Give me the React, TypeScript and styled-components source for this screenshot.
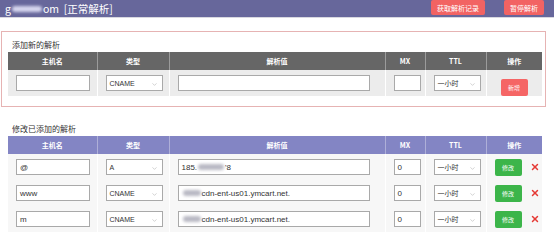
import styled, { createGlobalStyle } from "styled-components";
import { ChevronDown, X } from "lucide-react";

const GlobalStyle = createGlobalStyle`
  html, body {
    margin: 0;
    padding: 0;
    background: #fff;
  }
  body {
    font-family: "Noto Sans CJK SC", "Liberation Sans", sans-serif;
    color: #333;
  }
  * { box-sizing: border-box; }
`;

const Page = styled.div`
  width: 554px;
  height: 238px;
  overflow: hidden;
`;

const Header = styled.header`
  height: 18px;
  background: #67679b;
  border-bottom: 1px solid #d8d8e0;
  display: flex;
  align-items: flex-start;
  justify-content: space-between;
  padding: 0 10px 0 5px;
`;

const Domain = styled.div`
  color: #fff;
  font-size: 10.5px;
  line-height: 17px;
  display: flex;
  align-items: center;
  white-space: pre;
`;

const Blur = styled.span<{ $w: number; $dark?: boolean }>`
  display: inline-block;
  width: ${(p) => p.$w}px;
  height: 6px;
  border-radius: 3px;
  background: ${(p) => (p.$dark ? "#b9b9c4" : "#d6d6ee")};
  filter: blur(1.5px);
  margin: 0 1px;
`;

const HeaderButtons = styled.div`
  display: flex;
  gap: 19px;
`;

const HeadButton = styled.button<{ $w: number }>`
  width: ${(p) => p.$w}px;
  height: 15px;
  border: none;
  border-radius: 2px;
  background: #f26363;
  color: #fff;
  font-family: inherit;
  font-size: 7px;
  padding: 0;
`;

const Section = styled.section<{ $boxed?: boolean }>`
  margin: ${(p) => (p.$boxed ? "13px 8px 0 1px" : "8px 8px 0 1px")};
  border: 1px solid ${(p) => (p.$boxed ? "#e6b3b3" : "transparent")};
  padding: 4px 3px 10px 6px;
`;

const Title = styled.div`
  font-size: 8px;
  line-height: 12px;
  color: #333;
  padding-left: 4px;
  height: 16px;
  padding-top: 3px;
`;

const Table = styled.table`
  width: 534px;
  border-collapse: collapse;
  table-layout: fixed;
`;

const Th = styled.th<{ $tone: "gray" | "purple" }>`
  background: ${(p) => (p.$tone === "gray" ? "#666666" : "#8385c4")};
  color: #fff;
  font-size: 7px;
  font-weight: bold;
  height: 18px;
  padding: 0;
  border-left: 1px solid rgba(255, 255, 255, 0.35);
  &:first-child { border-left: none; }
`;

const Td = styled.td<{ $tone: "gray" | "light" }>`
  background: ${(p) => (p.$tone === "gray" ? "#ececec" : "#f7f7f7")};
  height: 26px;
  padding: 0 0 0 8px;
  border-left: 1px solid #fff;
  vertical-align: middle;
  &:first-child { border-left: none; }
`;

const Field = styled.div<{ $w: number }>`
  width: ${(p) => p.$w}px;
  height: 16px;
  border: 1px solid #a9a9a9;
  background: #fff;
  font-size: 8px;
  color: #333;
  padding-left: 3px;
  display: flex;
  align-items: center;
  position: relative;
  font-family: "Liberation Sans", "Noto Sans CJK SC", sans-serif;
`;

const SelectText = styled.span`
  font-size: 7px;
`;

const Chevron = styled(ChevronDown)`
  position: absolute;
  right: 4px;
  top: 5px;
  color: #999;
`;

const Btn = styled.button<{ $color: string }>`
  width: 27px;
  height: 17px;
  border: none;
  border-radius: 2px;
  background: ${(p) => p.$color};
  color: #fff;
  font-family: inherit;
  font-size: 6px;
  padding: 0;
`;

const ActionCell = styled.div`
  display: flex;
  align-items: center;
  gap: 8px;
`;

const Del = styled(X)`
  color: #e53935;
`;

const widths = [89, 72, 216, 40, 61, 56];
const heads = ["主机名", "类型", "解析值", "MX", "TTL", "操作"];

const Select = ({ value, w }: { value: string; w: number }) => (
  <Field $w={w}>
    <SelectText>{value}</SelectText>
    <Chevron size={7} strokeWidth={1.5} />
  </Field>
);

const HeadRow = ({ tone }: { tone: "gray" | "purple" }) => (
  <>
    <colgroup>
      {widths.map((w, i) => (
        <col key={i} style={{ width: w }} />
      ))}
    </colgroup>
    <thead>
      <tr>
        {heads.map((h) => (
          <Th key={h} $tone={tone}>
            {h}
          </Th>
        ))}
      </tr>
    </thead>
  </>
);

const records = [
  { host: "@", type: "A", value: "ip" },
  { host: "www", type: "CNAME", value: "cdn" },
  { host: "m", type: "CNAME", value: "cdn" },
];

export default function App() {
  return (
    <Page>
      <GlobalStyle />
      <Header>
        <Domain>
          g<Blur $w={30} />om  [正常解析]
        </Domain>
        <HeaderButtons>
          <HeadButton $w={54}>获取解析记录</HeadButton>
          <HeadButton $w={40}>暂停解析</HeadButton>
        </HeaderButtons>
      </Header>

      <Section $boxed>
        <Title>添加新的解析</Title>
        <Table>
          <HeadRow tone="gray" />
          <tbody>
            <tr>
              <Td $tone="gray">
                <Field $w={74} />
              </Td>
              <Td $tone="gray">
                <Select value="CNAME" w={57} />
              </Td>
              <Td $tone="gray">
                <Field $w={192} />
              </Td>
              <Td $tone="gray">
                <Field $w={27} />
              </Td>
              <Td $tone="gray">
                <Select value="一小时" w={47} />
              </Td>
              <Td $tone="gray" style={{ paddingLeft: 14 }}>
                <Btn $color="#f56565">新增</Btn>
              </Td>
            </tr>
          </tbody>
        </Table>
      </Section>

      <Section>
        <Title>修改已添加的解析</Title>
        <Table>
          <HeadRow tone="purple" />
          <tbody>
            {records.map((r) => (
              <tr key={r.host}>
                <Td $tone="light">
                  <Field $w={74}>{r.host}</Field>
                </Td>
                <Td $tone="light">
                  <Select value={r.type} w={57} />
                </Td>
                <Td $tone="light">
                  <Field $w={192}>
                    {r.value === "ip" ? (
                      <>
                        185.<Blur $w={26} $dark />'8
                      </>
                    ) : (
                      <>
                        <Blur $w={18} $dark />cdn-ent-us01.ymcart.net.
                      </>
                    )}
                  </Field>
                </Td>
                <Td $tone="light">
                  <Field $w={27}>0</Field>
                </Td>
                <Td $tone="light">
                  <Select value="一小时" w={47} />
                </Td>
                <Td $tone="light">
                  <ActionCell>
                    <Btn $color="#3cb54a">修改</Btn>
                    <Del size={10} strokeWidth={3.5} />
                  </ActionCell>
                </Td>
              </tr>
            ))}
          </tbody>
        </Table>
      </Section>
    </Page>
  );
}
